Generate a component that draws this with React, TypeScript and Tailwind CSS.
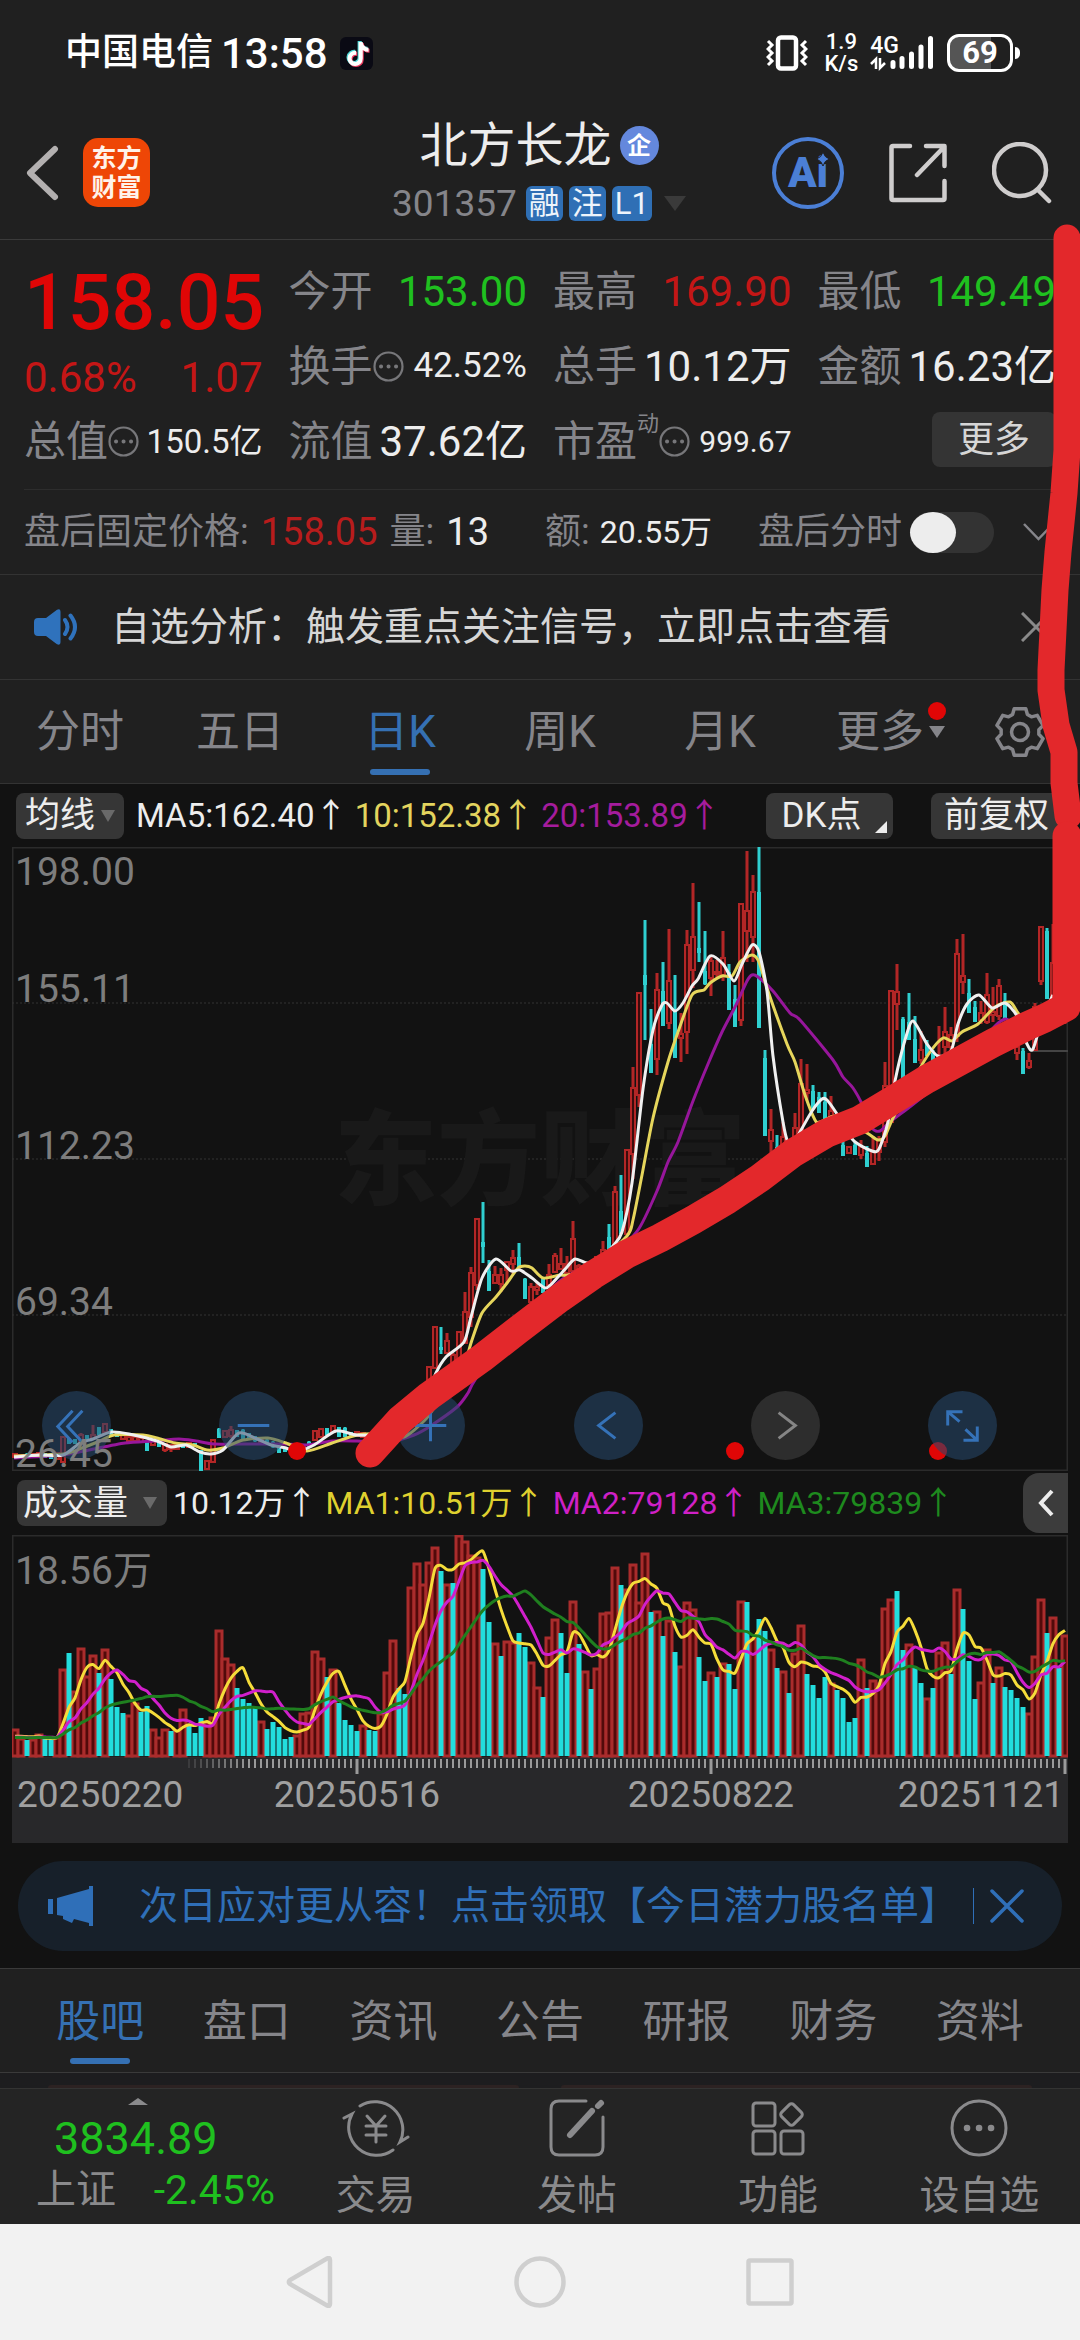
import type { ReactNode } from 'react'
import { FaTiktok } from 'react-icons/fa6'

type Point = [number, number]
// x slot, high, body top, body bottom, low, direction
type Candle = [number, number, number, number, number, 'u' | 'd']

const UP = '#b32626'
const DOWN = '#2fcfd0'

const candles: Candle[] = [
    [0, 607, 607, 610, 610, 'u'], [1, 607, 608, 611, 611, 'u'], [2, 606, 607, 611, 611, 'd'], [3, 606, 607, 610, 610, 'u'],
    [4, 605, 606, 610, 611, 'u'], [5, 606, 606, 611, 611, 'd'], [6, 606, 607, 612, 612, 'd'], [7, 605, 606, 612, 612, 'u'],
    [8, 590, 590, 615, 615, 'u'], [9, 591, 591, 597, 597, 'd'], [10, 592, 592, 597, 597, 'd'], [11, 586, 588, 594, 595, 'u'],
    [12, 588, 588, 594, 594, 'd'], [13, 578, 588, 592, 593, 'u'], [14, 580, 580, 588, 588, 'd'], [15, 576, 577, 585, 586, 'u'],
    [16, 582, 582, 588, 588, 'd'], [17, 586, 586, 590, 590, 'd'], [18, 588, 588, 592, 593, 'u'], [19, 589, 590, 594, 594, 'u'],
    [20, 589, 590, 594, 595, 'u'], [21, 590, 591, 595, 595, 'u'], [22, 595, 595, 604, 604, 'd'], [23, 592, 593, 598, 598, 'u'],
    [24, 594, 595, 600, 600, 'd'], [25, 596, 597, 603, 605, 'u'], [26, 597, 598, 602, 605, 'u'], [27, 598, 598, 602, 603, 'u'],
    [28, 596, 597, 601, 601, 'd'], [29, 595, 596, 600, 601, 'u'], [30, 596, 596, 600, 600, 'd'], [31, 603, 603, 625, 625, 'd'],
    [32, 613, 614, 622, 623, 'u'], [33, 592, 593, 615, 616, 'u'], [34, 581, 582, 591, 591, 'd'], [35, 584, 584, 590, 591, 'u'],
    [36, 579, 583, 589, 591, 'u'], [37, 583, 583, 590, 590, 'd'], [38, 582, 583, 592, 592, 'd'], [39, 586, 586, 592, 593, 'd'],
    [40, 589, 589, 594, 595, 'd'], [41, 591, 591, 595, 596, 'u'], [42, 592, 593, 597, 598, 'd'], [43, 594, 595, 600, 601, 'd'],
    [44, 598, 599, 606, 606, 'd'], [45, 600, 600, 605, 605, 'd'], [46, 601, 601, 605, 605, 'd'], [47, 599, 600, 605, 606, 'u'],
    [48, 598, 599, 604, 604, 'u'], [49, 594, 595, 600, 600, 'd'], [50, 583, 584, 593, 594, 'u'], [51, 581, 582, 590, 591, 'u'],
    [52, 581, 581, 588, 588, 'd'], [53, 578, 579, 585, 586, 'u'], [54, 580, 580, 590, 590, 'd'], [55, 580, 581, 590, 590, 'd'],
    [56, 585, 585, 590, 590, 'd'], [57, 584, 585, 589, 590, 'u'], [58, 585, 586, 590, 590, 'u'], [59, 586, 586, 590, 591, 'd'],
    [60, 585, 586, 590, 590, 'u'], [61, 583, 584, 590, 591, 'u'], [69, 520, 520, 536, 536, 'u'], [70, 480, 480, 521, 521, 'u'],
    [71, 480, 500, 503, 507, 'd'], [72, 486, 494, 506, 506, 'u'], [73, 506, 508, 516, 516, 'u'], [74, 485, 485, 516, 516, 'u'],
    [75, 445, 465, 496, 496, 'u'], [76, 420, 426, 470, 480, 'u'], [77, 371, 372, 438, 443, 'u'], [78, 355, 395, 400, 416, 'd'],
    [79, 413, 424, 444, 444, 'd'], [80, 419, 428, 436, 437, 'u'], [81, 421, 428, 437, 445, 'u'], [82, 415, 415, 423, 436, 'u'],
    [83, 403, 411, 417, 427, 'u'], [84, 396, 410, 420, 420, 'd'], [85, 431, 432, 452, 452, 'd'], [86, 436, 440, 455, 456, 'u'],
    [87, 435, 440, 443, 448, 'u'], [88, 431, 432, 446, 446, 'd'], [89, 417, 428, 438, 438, 'u'], [90, 406, 409, 425, 425, 'u'],
    [91, 401, 417, 422, 422, 'u'], [92, 409, 417, 426, 426, 'u'], [93, 374, 392, 424, 424, 'u'], [94, 417, 419, 426, 426, 'u'],
    [97, 409, 410, 420, 420, 'u'], [98, 394, 403, 409, 409, 'u'], [99, 377, 390, 403, 403, 'd'], [100, 339, 345, 401, 401, 'u'],
    [101, 328, 364, 387, 387, 'd'], [102, 302, 303, 387, 387, 'u'], [103, 220, 241, 307, 332, 'u'], [104, 145, 146, 248, 260, 'u'],
    [105, 73, 128, 138, 193, 'd'], [106, 162, 197, 226, 226, 'd'], [107, 126, 143, 212, 228, 'u'], [108, 115, 144, 179, 179, 'd'],
    [109, 82, 134, 176, 182, 'u'], [110, 128, 162, 211, 211, 'd'], [111, 166, 187, 191, 215, 'u'], [112, 83, 98, 185, 207, 'u'],
    [113, 36, 90, 123, 141, 'u'], [114, 55, 101, 106, 115, 'd'], [115, 84, 124, 137, 138, 'd'], [116, 109, 114, 131, 149, 'u'],
    [117, 113, 125, 127, 132, 'u'], [118, 84, 111, 128, 134, 'u'], [119, 117, 125, 163, 163, 'd'], [120, 138, 152, 180, 180, 'd'],
    [121, 56, 57, 173, 179, 'u'], [122, 4, 64, 84, 115, 'u'], [123, 28, 45, 90, 115, 'u'], [124, 0, 45, 181, 181, 'd'],
    [125, 203, 211, 289, 289, 'd'], [126, 262, 283, 294, 315, 'u'], [127, 288, 300, 315, 315, 'd'], [128, 275, 290, 311, 311, 'u'],
    [129, 295, 296, 307, 307, 'u'], [130, 266, 281, 293, 293, 'u'], [131, 212, 237, 285, 291, 'u'], [132, 217, 243, 246, 254, 'u'],
    [133, 238, 244, 262, 262, 'd'], [134, 245, 250, 266, 266, 'd'], [135, 245, 255, 273, 273, 'd'], [136, 249, 264, 269, 275, 'u'],
    [138, 293, 298, 309, 309, 'd'], [139, 299, 300, 306, 307, 'u'], [140, 295, 298, 308, 308, 'd'], [141, 293, 300, 308, 312, 'u'],
    [142, 299, 306, 320, 320, 'd'], [143, 289, 305, 317, 318, 'u'], [144, 289, 293, 305, 314, 'u'], [145, 215, 239, 295, 300, 'u'],
    [146, 143, 144, 275, 275, 'u'], [147, 117, 145, 157, 183, 'u'], [148, 170, 172, 246, 246, 'd'], [149, 146, 175, 193, 193, 'd'],
    [150, 169, 192, 216, 216, 'd'], [151, 184, 203, 213, 217, 'u'], [152, 193, 197, 209, 209, 'd'], [153, 203, 206, 220, 220, 'd'],
    [154, 179, 209, 215, 217, 'u'], [155, 160, 185, 200, 215, 'u'], [156, 180, 188, 200, 209, 'u'], [157, 92, 107, 189, 195, 'u'],
    [158, 87, 129, 135, 147, 'u'], [159, 132, 146, 166, 166, 'd'], [160, 154, 160, 175, 175, 'd'], [161, 154, 166, 173, 177, 'u'],
    [162, 126, 148, 175, 177, 'u'], [163, 140, 165, 168, 175, 'u'], [164, 132, 139, 169, 173, 'u'], [165, 146, 154, 173, 173, 'd'],
    [167, 197, 200, 206, 213, 'u'], [168, 201, 204, 227, 227, 'd'], [169, 206, 214, 220, 222, 'u'], [170, 156, 160, 203, 203, 'u'],
    [171, 79, 80, 134, 138, 'u'], [172, 81, 84, 152, 152, 'd'], [173, 77, 116, 156, 156, 'u'], [175, 156, 160, 172, 177, 'u'],
]

const ma5: Point[] = [
    [2, 610], [27, 608], [51, 608], [68, 596], [81, 592], [99, 585], [117, 587], [145, 594], [159, 600], [174, 598], [188, 605],
    [199, 607], [211, 603], [227, 586], [245, 592], [259, 598], [274, 601], [284, 605], [302, 598], [324, 584], [345, 588],
    [374, 588], [392, 588], [409, 563], [424, 526], [434, 510], [452, 495], [459, 470], [470, 431], [484, 412], [499, 424],
    [508, 423], [520, 431], [534, 441], [546, 430], [555, 420], [563, 412], [575, 416], [588, 413], [601, 399], [610, 385],
    [620, 336], [631, 242], [641, 183], [650, 158], [655, 156], [663, 164], [671, 156], [680, 139], [686, 132], [698, 109],
    [711, 117], [722, 134], [730, 117], [740, 98], [747, 105], [755, 144], [761, 209], [771, 275], [776, 295], [783, 293],
    [800, 264], [810, 252], [815, 253], [825, 267], [841, 293], [860, 304], [867, 302], [876, 275], [883, 234], [893, 193],
    [901, 174], [915, 197], [926, 209], [939, 204], [946, 177], [955, 157], [967, 148], [980, 161], [993, 156], [1005, 169],
    [1015, 197], [1021, 202], [1031, 169], [1041, 148],
]

const ma10: Point[] = [
    [2, 609], [51, 607], [70, 601], [88, 594], [102, 588], [131, 588], [145, 591], [163, 596], [181, 598], [195, 603], [211, 601],
    [231, 593], [256, 591], [274, 596], [295, 604], [320, 596], [345, 588], [367, 587], [392, 590], [413, 573], [424, 558],
    [440, 535], [452, 520], [459, 496], [470, 466], [484, 450], [495, 436], [506, 421], [513, 419], [520, 421], [531, 431],
    [548, 428], [556, 428], [580, 420], [615, 389], [621, 373], [630, 328], [641, 271], [656, 215], [666, 185], [680, 148],
    [692, 143], [698, 136], [710, 129], [720, 129], [728, 115], [740, 108], [747, 115], [756, 144], [775, 197], [783, 215],
    [793, 248], [803, 273], [808, 275], [826, 269], [855, 286], [866, 293], [873, 289], [881, 271], [903, 230], [918, 205],
    [931, 191], [940, 194], [950, 185], [966, 177], [983, 160], [998, 155], [1006, 166], [1015, 177],
]

const ma20: Point[] = [
    [2, 611], [51, 608], [77, 603], [113, 596], [142, 594], [167, 592], [184, 594], [202, 597], [238, 597], [274, 597], [295, 598],
    [320, 594], [345, 594], [377, 595], [402, 588], [417, 580], [445, 560], [456, 546], [463, 533], [500, 480], [548, 434],
    [565, 424], [598, 410], [626, 383], [645, 344], [656, 315], [666, 295], [681, 254], [696, 217], [710, 185], [723, 160],
    [735, 134], [740, 128], [746, 130], [761, 144], [778, 166], [788, 173], [821, 213], [831, 230], [841, 241], [851, 259],
    [860, 281], [868, 284], [878, 275], [915, 246], [968, 197], [983, 179], [993, 172], [998, 174],
]

// bar heights, negative on a falling day
const volumes = [
    27, 18, -16, 17, 22, -17, -17, 19, 87, -103, 65, 108, 80, 101, -83, 107, -77, -49, -43, 41, 53, -44, -50, 27,
    19, 27, -25, 26, 47, -31, -23, -38, 34, 39, 126, 98, 92, -68, -57, -53, -48, 35, -27, -34, -29, -17, -19, 21,
    43, 44, 105, 98, -79, 87, -53, -36, -31, -25, 31, -26, -25, 43, 84, 116, -68, -62, 169, 193, 172, 194, 209, -185,
    172, -173, 221, 215, 201, 199, -187, -134, 113, -100, 115, 114, -123, -109, 94, 69, -59, 119, 137, -123, -83, 155, -112, 85,
    -67, 88, 143, 144, 189, -171, 167, 192, 154, 203, -144, 145, -120, 136, -104, 90, 154, 147, -99, -75, 84, -79, 93, -92,
    -67, 155, -154, 118, -137, -125, 107, -88, 85, -63, 103, 131, -82, -71, -58, -79, 73, -66, -58, -34, -38, 97, -68, 76,
    73, 148, 157, -165, -106, 112, -88, -73, 58, -68, 104, 114, -82, 167, -147, -95, -57, 74, 107, -73, 89, -69, -66, -58,
    -49, 43, 100, 157, -123, 139, -88, 121,
]

const slotX = (i: number) => 3 + i * 6

function average(size: number): Point[] {
    return volumes.map((_, i) => {
        let sum = 0
        for (let k = i - size + 1; k <= i; k++) sum += k < 0 ? 18 : Math.abs(volumes[k])
        return [slotX(i), 221 - sum / size]
    })
}

function curve(points: Point[]) {
    let d = `M${points[0][0]} ${points[0][1]}`
    for (let i = 0; i < points.length - 1; i++) {
        const p0 = points[i - 1] ?? points[i]
        const p1 = points[i]
        const p2 = points[i + 1]
        const p3 = points[i + 2] ?? p2
        d += `C${p1[0] + (p2[0] - p0[0]) / 8} ${p1[1] + (p2[1] - p0[1]) / 8} ${p2[0] - (p3[0] - p1[0]) / 8} ${p2[1] - (p3[1] - p1[1]) / 8} ${p2[0]} ${p2[1]}`
    }
    return d
}

const gearPoints = [0, 60, 120, 180, 240, 300]
    .flatMap((a) => [[a - 23, 19], [a - 14, 24], [a + 14, 24], [a + 23, 19]])
    .map(([a, r]) => {
        const t = ((a - 90) * Math.PI) / 180
        return `${26 + r * Math.cos(t)},${26 + r * Math.sin(t)}`
    })
    .join(' ')

function StatusBar() {
    return (
        <div className="flex h-[106px] items-center pl-[65px] pr-[60px] text-white">
            <span className="text-[37px] font-medium">中国电信</span>
            <span className="ml-2 text-[42px] font-medium">13:58</span>
            <span className="relative ml-3 flex h-[33px] w-[33px] items-center justify-center rounded-md bg-[#0a0a14]">
                <FaTiktok className="absolute left-[5px] top-[4px] h-6 w-6 text-[#4fd8d8]" />
                <FaTiktok className="absolute left-[7px] top-[6px] h-6 w-6 text-[#ee3a60]" />
                <FaTiktok className="absolute left-[6px] top-[5px] h-6 w-6 text-white" />
            </span>
            <div className="ml-auto flex items-center">
                <svg className="h-[36px] w-[42px]" viewBox="0 0 42 36" fill="none" stroke="currentColor">
                    <rect x="12" y="2.500" width="18" height="31" rx="3" strokeWidth="4.500" />
                    <path d="M2 6l4 4-4 4 4 4-4 4 4 4-4 4M40 6l-4 4 4 4-4 4 4 4-4 4 4 4" strokeWidth="3" />
                </svg>
                <span className="ml-4 flex flex-col items-center text-[22px] leading-[22px] font-medium">
                    <span>1.9</span>
                    <span>K/s</span>
                </span>
                <span className="ml-3 flex flex-col">
                    <span className="text-[23px] leading-[19px] font-medium">4G</span>
                    <svg className="h-4 w-[17px]" viewBox="0 0 17 16" fill="none" stroke="currentColor" strokeWidth="2.500">
                        <path d="M6 14V4L1 9M10 3v10l5-5" />
                    </svg>
                </span>
                <svg className="-ml-[9px] h-[36px] w-[45px]" viewBox="0 0 45 36" stroke="currentColor" strokeWidth="5" strokeLinecap="round">
                    <path d="M3 27.500v4M12 23.500v8M21.500 19v12.500M31 12v19.500M40.500 3.500v28" />
                </svg>
                <span className="ml-3 flex h-[38px] w-[66px] items-center justify-center rounded-xl border-[3px] border-white bg-linear-to-r from-[#555] from-69% to-transparent to-69% text-[31px] font-bold">
                    69
                </span>
                <span className="ml-[2px] h-3 w-[5px] rounded-r-full bg-white" />
            </div>
        </div>
    )
}

function Header() {
    return (
        <header className="grid h-[134px] grid-cols-[1fr_auto_1fr] items-center border-b border-[#3a3a3a] pl-[26px] pr-[28px]">
            <div className="flex items-center gap-6">
                <button aria-label="返回">
                    <svg className="h-[56px] w-[33px]" viewBox="0 0 33 56" fill="none" stroke="#b3b0b0" strokeWidth="6" strokeLinecap="round" strokeLinejoin="round">
                        <path d="M29 4L4 28l25 24" />
                    </svg>
                </button>
                <a href="#home" className="flex h-[69px] w-[67px] flex-col items-center justify-center rounded-[15px] bg-[#ee4606] text-[25px] leading-[29px] font-bold text-[#fff3ea]">
                    <span>东方</span>
                    <span>财富</span>
                </a>
            </div>
            <div className="flex flex-col items-center">
                <h1 className="flex items-center gap-2 text-[48px] leading-[62px] text-[#ededed]">
                    北方长龙
                    <span className="flex h-[39px] w-[39px] items-center justify-center rounded-full bg-[#6488dd] text-[24px] leading-none font-bold text-white">企</span>
                </h1>
                <div className="flex items-center gap-[6px] text-[37px] leading-[54px] text-[#85858a]">
                    <span className="mr-[3px]">301357</span>
                    <Tag>融</Tag>
                    <Tag>注</Tag>
                    <Tag>L1</Tag>
                    <svg className="ml-[6px] h-[15px] w-[22px]" viewBox="0 0 22 15" fill="#3a3a3a">
                        <path d="M0 0h22L11 15z" />
                    </svg>
                </div>
            </div>
            <div className="flex items-center justify-end gap-[45px] text-[#cfcdcd]">
                <button aria-label="Ai" className="relative flex h-[72px] w-[72px] items-center justify-center rounded-full border-4 border-[#4b7fd6] text-[42px] leading-none font-black text-[#4b7fd6]">
                    Ai
                    <svg className="absolute right-[9px] top-[10px] h-4 w-4" viewBox="0 0 16 16" fill="#4b7fd6" stroke="#202020">
                        <path d="M8 1q1.500 5.500 6.500 7Q9.500 9.500 8 15 6.500 9.500 1.500 8 6.500 6.500 8 1z" />
                    </svg>
                </button>
                <button aria-label="分享">
                    <svg className="h-[60px] w-[58px]" viewBox="0 0 58 60" fill="none" stroke="currentColor" strokeWidth="4.500" strokeLinecap="round" strokeLinejoin="round">
                        <path d="M21 3H4q-1.500 0-1.500 1.500v51Q2.500 57 4 57h50q1.500 0 1.500-1.500V38M37 3h18.500v20M55 4L28 32" />
                    </svg>
                </button>
                <button aria-label="搜索">
                    <svg className="h-[62px] w-[60px]" viewBox="0 0 60 62" fill="none" stroke="currentColor" strokeWidth="4.500" strokeLinecap="round">
                        <circle cx="28" cy="28" r="26" />
                        <path d="M46 48l11 11" />
                    </svg>
                </button>
            </div>
        </header>
    )
}

function Tag({ children }: { children: ReactNode }) {
    return <span className="flex h-[35px] min-w-[36px] items-center justify-center rounded-md bg-[#2f6fb5] px-[3px] text-[31px] leading-none text-[#eef4fb]">{children}</span>
}

function InfoDots() {
    return (
        <svg className="h-[31px] w-[31px] shrink-0" viewBox="0 0 31 31" fill="none" stroke="#77777a" strokeWidth="2.200">
            <circle cx="15.500" cy="15.500" r="14" />
            <path d="M8 15.500h.1M15.500 15.500h.1M23 15.500h.1" strokeWidth="4" strokeLinecap="round" />
        </svg>
    )
}

interface StatProps {
    label: string
    value: string
    valueClass?: string
    sup?: string
    info?: boolean
}

function Stat({ label, value, valueClass = 'text-[42px] text-[#ededed]', sup, info }: StatProps) {
    return (
        <div className="flex items-center whitespace-nowrap">
            <span className="text-[42px] text-[#85858a]">{label}</span>
            {sup && <span className="mb-9 text-[22px] text-[#85858a]">{sup}</span>}
            {info && <InfoDots />}
            <span className={`ml-auto ${valueClass}`}>{value}</span>
        </div>
    )
}

function Quote() {
    return (
        <section className="grid grid-cols-4 grid-rows-[75px_75px_75px] gap-x-[26px] px-6 pt-[14px] pb-[10px]">
            <div className="row-span-2 text-[#c41616]">
                <div className="text-right text-[77px] leading-[98px] font-medium text-[#e00606]">158.05</div>
                <div className="flex justify-between text-[42px] leading-[52px]">
                    <span>0.68%</span>
                    <span>1.07</span>
                </div>
            </div>
            <Stat label="今开" value="153.00" valueClass="text-[42px] text-[#1fc01f]" />
            <Stat label="最高" value="169.90" valueClass="text-[42px] text-[#c41616]" />
            <Stat label="最低" value="149.49" valueClass="text-[42px] text-[#1fc01f]" />
            <Stat label="换手" value="42.52%" info valueClass="text-[35px] text-[#ededed]" />
            <Stat label="总手" value="10.12万" />
            <Stat label="金额" value="16.23亿" />
            <Stat label="总值" value="150.5亿" info valueClass="text-[33px] text-[#ededed]" />
            <Stat label="流值" value="37.62亿" />
            <Stat label="市盈" value="999.67" sup="动" info valueClass="text-[30px] text-[#ededed]" />
            <button className="mt-[8px] h-[55px] w-[124px] justify-self-end rounded-lg bg-[#343434] text-[36px] leading-none text-[#d6d6d6]">更多</button>
        </section>
    )
}

function AfterHours() {
    return (
        <section className="mx-6 flex h-[85px] items-center border-t border-[#2d2d2d] text-[36px] whitespace-nowrap text-[#85858a]">
            <span>盘后固定价格:</span>
            <span className="ml-3 text-[38px] text-[#b81c1c]">158.05</span>
            <span className="ml-3">量:</span>
            <span className="ml-3 text-[38px] text-[#ededed]">13</span>
            <span className="ml-[56px]">额:</span>
            <span className="ml-[10px] text-[32px] text-[#ededed]">20.55万</span>
            <label className="ml-auto flex items-center gap-2">
                盘后分时
                <input
                    type="checkbox"
                    className="h-[41px] w-[84px] appearance-none rounded-full bg-[#333] before:block before:h-full before:w-[46px] before:rounded-[50%] before:bg-[#ededed] checked:before:ml-auto"
                />
            </label>
            <button aria-label="展开" className="ml-[29px] mr-[2px]">
                <svg className="h-[18px] w-[31px]" viewBox="0 0 31 18" fill="none" stroke="#85858a" strokeWidth="2.500">
                    <path d="M1 1l14.500 15L30 1" />
                </svg>
            </button>
        </section>
    )
}

function Notice() {
    return (
        <section className="flex h-[106px] items-center border-y border-[#333] pl-[34px] pr-[29px]">
            <svg className="h-[36px] w-[44px]" viewBox="0 0 44 36" fill="#2f72bc">
                <path d="M4 9h8L23 .8q3.500-1.500 3.500 2v30.400q0 3.500-3.500 2L12 27H4q-4 0-4-4V13q0-4 4-4z" />
                <path d="M31 11q5 7 0 14M36.500 6.500q9 11.500 0 23" fill="none" stroke="#2f72bc" strokeWidth="4" strokeLinecap="round" />
            </svg>
            <a href="#analysis" className="ml-[33px] text-[39px] text-[#d6d6d6]">自选分析：触发重点关注信号，立即点击查看</a>
            <button aria-label="关闭" className="ml-auto">
                <svg className="h-[30px] w-[30px]" viewBox="0 0 30 30" stroke="#8a8a8a" strokeWidth="3">
                    <path d="M1 1l28 28M29 1L1 29" />
                </svg>
            </button>
        </section>
    )
}

function PeriodTabs() {
    return (
        <nav className="grid h-[103px] grid-cols-[repeat(6,4fr)_3fr] text-[44px] text-[#85858a]">
            {['分时', '五日', '日K', '周K', '月K', '更多'].map((name) => (
                <button key={name} className={`relative flex items-center justify-center ${name === '日K' ? 'text-[#3570b3]' : ''}`}>
                    {name}
                    {name === '日K' && <span className="absolute bottom-[8px] h-[6px] w-[60px] rounded-full bg-[#3570b3]" />}
                    {name === '更多' && (
                        <>
                            <span className="absolute top-[22px] right-[14px] h-[18px] w-[18px] rounded-full bg-[#e00606]" />
                            <svg className="absolute top-[46px] right-[15px] h-[12px] w-[16px]" viewBox="0 0 16 12" fill="currentColor">
                                <path d="M0 0h16L8 12z" />
                            </svg>
                        </>
                    )}
                </button>
            ))}
            <button aria-label="设置" className="flex items-center justify-center">
                <svg className="h-[52px] w-[52px]" viewBox="0 0 52 52" fill="none" stroke="currentColor" strokeWidth="3.500" strokeLinejoin="round">
                    <polygon points={gearPoints} />
                    <circle cx="26" cy="26" r="8.500" />
                </svg>
            </button>
        </nav>
    )
}

function Caret() {
    return (
        <svg className="h-[12px] w-[14px]" viewBox="0 0 14 12" fill="#6a6a6a">
            <path d="M0 0h14L7 12z" />
        </svg>
    )
}

function PriceLegend() {
    return (
        <div className="flex h-[63px] items-center pr-[6px] pl-1 text-[33px] whitespace-nowrap text-[#ededed]">
            <button className="flex h-[46px] items-center gap-[6px] rounded-lg bg-[#363636] px-[9px] text-[35px] leading-none">
                均线
                <Caret />
            </button>
            <span className="ml-3">MA5:162.40↑</span>
            <span className="ml-[7px] text-[#e3d45e]">10:152.38↑</span>
            <span className="ml-[7px] text-[#a51c9d]">20:153.89↑</span>
            <button className="relative ml-auto h-[46px] w-[127px] rounded-lg bg-[#363636] pr-4 text-[35px] leading-none">
                DK点
                <svg className="absolute right-[6px] bottom-[6px] h-[12px] w-[12px]" viewBox="0 0 12 12" fill="currentColor">
                    <path d="M12 0v12H0z" />
                </svg>
            </button>
            <button className="ml-[38px] h-[46px] w-[131px] rounded-lg bg-[#363636] text-[35px] leading-none">前复权</button>
        </div>
    )
}

const priceLabels = [
    { y: 38, text: '198.00' },
    { y: 155, text: '155.11' },
    { y: 312, text: '112.23' },
    { y: 468, text: '69.34' },
    { y: 620, text: '26.45' },
]

const chartTools = [
    { label: '最左', d: 'M31 20L16 36l15 16M41 20L26 36l15 16' },
    { label: '缩小', d: 'M19 35h32' },
    { label: '放大', d: 'M19 35h32M35 19v32' },
    { label: '左移', d: 'M42 22L25 35l17 13' },
    { label: '右移', d: 'M28 22l17 13-17 13', off: true },
    { label: '全屏', d: 'M32 31L20 21M20 35V21h15M38 39l12 11M50 36v14H36' },
]

function PriceChart() {
    return (
        <div className="relative">
            <svg className="block w-full" viewBox="0 0 1056 624">
                <rect x="0.500" y="0.500" width="1055" height="623" fill="none" stroke="#2b2b2b" strokeWidth="2" />
                <path d="M0 156h1056M0 312h1056M0 468h1056" stroke="#333" strokeDasharray="2 2" />
                <text x="528" y="350" textAnchor="middle" fontSize="103" fontWeight="900" fill="#191919">东方财富</text>
                <path d="M1020 204h36" stroke="#444" strokeWidth="2" />
                {candles.map(([i, high, top, bottom, low, dir]) =>
                    dir === 'u' ? (
                        <g key={i} stroke={UP} strokeWidth="2">
                            <path d={`M${slotX(i)} ${high}V${top}M${slotX(i)} ${bottom}V${low}`} strokeWidth="3" />
                            <rect x={slotX(i) - 2} y={top} width="4" height={bottom - top} fill="#3a0c0c" />
                        </g>
                    ) : (
                        <g key={i} stroke={DOWN}>
                            <path d={`M${slotX(i)} ${high}V${low}`} strokeWidth="3" />
                            <path d={`M${slotX(i)} ${top}V${bottom}`} strokeWidth="4" />
                        </g>
                    )
                )}
                <g fill="none" strokeWidth="3" strokeLinejoin="round">
                    <path d={curve(ma20)} stroke="#97169b" />
                    <path d={curve(ma10)} stroke="#e6d65c" />
                    <path d={curve(ma5)} stroke="#f0f0f0" />
                </g>
                <g fill="#e00606">
                    <circle cx="285" cy="604" r="9" />
                    <circle cx="723" cy="604" r="9" />
                    <circle cx="926" cy="604" r="9" />
                </g>
            </svg>
            <div className="absolute right-[71px] bottom-[11px] left-[30px] flex justify-between">
                {chartTools.map((tool) => (
                    <button
                        key={tool.label}
                        aria-label={tool.label}
                        className={`h-[69px] w-[69px] rounded-full ${tool.off ? 'bg-[#2d2d2d] text-[#858585]' : 'bg-[#26486e]/55 text-[#3572b8]'}`}
                    >
                        <svg viewBox="0 0 70 70" fill="none" stroke="currentColor" strokeWidth="3">
                            <path d={tool.d} />
                        </svg>
                    </button>
                ))}
            </div>
            <svg className="pointer-events-none absolute inset-0 h-full w-full overflow-visible" viewBox="0 0 1056 624" fontSize="39" fill="#7d7d7d">
                {priceLabels.map((label) => (
                    <text key={label.text} x="3" y={label.y}>{label.text}</text>
                ))}
            </svg>
        </div>
    )
}

function VolumeLegend() {
    return (
        <div className="flex h-[64px] items-center pl-[5px] text-[32px] whitespace-nowrap text-[#ededed]">
            <button className="flex h-[46px] items-center gap-[15px] rounded-lg bg-[#363636] pr-[10px] pl-[6px] text-[35px] leading-none">
                成交量
                <Caret />
            </button>
            <span className="ml-[6px]">10.12万↑</span>
            <span className="ml-2 text-[#dfd02f]">MA1:10.51万↑</span>
            <span className="ml-2 text-[#cf20c6]">MA2:79128↑</span>
            <span className="ml-2 text-[#1e8a1e]">MA3:79839↑</span>
            <button aria-label="收起" className="ml-auto flex h-[60px] w-[45px] items-center justify-center rounded-l-2xl bg-[#3c3c3c]">
                <svg className="h-[30px] w-[18px]" viewBox="0 0 18 30" fill="none" stroke="currentColor" strokeWidth="4">
                    <path d="M15 3L4 15l11 12" />
                </svg>
            </button>
        </div>
    )
}

function VolumeChart() {
    return (
        <svg className="block w-full" viewBox="0 0 1056 308">
            <rect x="0.500" y="0.500" width="1055" height="222" fill="none" stroke="#2b2b2b" strokeWidth="2" />
            <text x="3" y="49" fontSize="39" fill="#7d7d7d">18.56万</text>
            <g fill="#520a0a" stroke="#aa2c2c" strokeWidth="3">
                {volumes.map((v, i) => v > 0 && <rect key={i} x={slotX(i) - 3} y={222 - v} width="6" height={v - 1} />)}
            </g>
            <g fill="#22dede">
                {volumes.map((v, i) => v < 0 && <rect key={i} x={slotX(i) - 2.5} y={221 + v} width="5" height={-v} />)}
            </g>
            <g fill="none" strokeWidth="3" strokeLinejoin="round">
                <path d={curve(average(5))} stroke="#f5dc3a" />
                <path d={curve(average(10))} stroke="#d11fcb" />
                <path d={curve(average(20))} stroke="#1f7f1f" />
            </g>
            <rect y="223" width="1056" height="85" fill="#28282a" />
            {volumes.map((_, i) => {
                const major = i === 57 || i === 116 || i === 175
                if (i < 29) return null
                return (
                    <path
                        key={i}
                        d={`M${slotX(i)} 224v${major ? 15 : 9}`}
                        stroke="#9a9a9a"
                        strokeWidth={major ? 3 : 2}
                        opacity={Math.min(1, (i - 27) / 12)}
                    />
                )
            })}
            <g fontSize="37" fill="#a0a0a0">
                <text x="5" y="272">20250220</text>
                <text x="345" y="272" textAnchor="middle">20250516</text>
                <text x="699" y="272" textAnchor="middle">20250822</text>
                <text x="1052" y="272" textAnchor="end">20251121</text>
            </g>
        </svg>
    )
}

function Promo() {
    return (
        <div className="mx-[18px] mt-[18px] flex h-[90px] items-center rounded-full bg-[#17202a] pr-[38px] pl-[29px] text-[#2f6fb8]">
            <svg className="h-[40px] w-[47px]" viewBox="0 0 47 40" fill="currentColor">
                <path d="M1 13h5v15H1zM10 12L42 3V0h4v40h-4v-3l-15-4-2 4-9-4v-3l-6-1z" />
            </svg>
            <a href="#promo" className="ml-[45px] text-[39px]">次日应对更从容！点击领取【今日潜力股名单】</a>
            <span className="ml-auto h-9 w-px bg-[#2f6fb8]" />
            <button aria-label="关闭" className="ml-[16px]">
                <svg className="h-[34px] w-[34px]" viewBox="0 0 34 34" stroke="currentColor" strokeWidth="3.500" strokeLinecap="round">
                    <path d="M2 2l30 30M32 2L2 32" />
                </svg>
            </button>
        </div>
    )
}

function InfoTabs() {
    return (
        <nav className="flex h-[105px] border-y border-[#3a3a3a] bg-[#202020] px-[27px] text-[44px] text-[#85858a]">
            {['股吧', '盘口', '资讯', '公告', '研报', '财务', '资料'].map((name, i) => (
                <a key={name} href={`#tab-${i}`} className={`relative flex flex-1 items-center justify-center pt-[2px] ${i === 0 ? 'text-[#3570b3]' : ''}`}>
                    {name}
                    {i === 0 && <span className="absolute bottom-[8px] h-[6px] w-[60px] rounded-full bg-[#3570b3]" />}
                </a>
            ))}
        </nav>
    )
}

function NavItem({ label, children }: { label: string; children: ReactNode }) {
    return (
        <button className="flex flex-1 flex-col items-center pt-2 text-[40px] leading-[54px]">
            <svg className="h-[62px] w-[68px]" viewBox="-34 -31 68 62" fill="none" stroke="currentColor" strokeWidth="3" strokeLinecap="round">
                {children}
            </svg>
            <span className="mt-[10px]">{label}</span>
        </button>
    )
}

function BottomBar() {
    return (
        <footer className="flex h-[136px] border-t border-[#333] bg-[#242424] text-[#8a8a8c]">
            <button className="flex w-[275px] flex-col pt-[9px] pl-[36px] text-left">
                <svg className="ml-[92px] h-[7px] w-[20px]" viewBox="0 0 20 7" fill="currentColor">
                    <path d="M0 7h20L10 0z" />
                </svg>
                <span className="pt-2 pl-[18px] text-[45px] leading-[52px] text-[#1fc01f]">3834.89</span>
                <span className="flex items-center justify-between text-[40px] leading-[50px]">
                    上证
                    <span className="text-[41px] text-[#1fc01f]">-2.45%</span>
                </span>
            </button>
            <NavItem label="交易">
                <path d="M-16-22A28 28 0 0 1 24 14l8-5M17 22A28 28 0 0 1-24-14l-8 4" />
                <path d="M-9-12L0-2 9-12M0-2v16M-10-2h20M-10 7h20" />
            </NavItem>
            <NavItem label="发帖">
                <path d="M9-27h-27q-8 0-8 8v38q0 8 8 8h36q8 0 8-8v-30" />
                <path d="M-7 7L15-17" strokeWidth="6" />
                <path d="M21-22l3-3" strokeWidth="6" />
            </NavItem>
            <NavItem label="功能">
                <rect x="-25" y="-25" width="22" height="23" rx="3" />
                <rect x="-25" y="3" width="22" height="23" rx="3" />
                <rect x="3" y="3" width="22" height="23" rx="3" />
                <rect x="5" y="-22" width="17" height="17" rx="3" transform="rotate(45 13.500 -13.500)" />
            </NavItem>
            <NavItem label="设自选">
                <circle r="27" />
                <path d="M-12 0h.1M0 0h.1M12 0h.1" strokeWidth="6.500" />
            </NavItem>
        </footer>
    )
}

const systemKeys = [
    { label: '返回', d: 'M46 4v44q0 3-3 1.500L6 28q-2.500-2 0-4L43 2.500Q46 1 46 4z' },
    { label: '主页', d: 'M26 2.500a23.500 23.500 0 1 1 0 47 23.500 23.500 0 1 1 0-47z' },
    { label: '最近', d: 'M6 4.500h40q1.500 0 1.500 1.500v40q0 1.500-1.500 1.500H6q-1.500 0-1.500-1.500V6q0-1.500 1.500-1.500z' },
]

function SystemNav() {
    return (
        <div className="flex h-[116px] items-center justify-center gap-[178px] bg-[#f2f2f2]">
            {systemKeys.map((item) => (
                <button key={item.label} aria-label={item.label}>
                    <svg className="h-[52px] w-[52px]" viewBox="0 0 52 52" fill="none" stroke="#cfcfcf" strokeWidth="4.500">
                        <path d={item.d} />
                    </svg>
                </button>
            ))}
        </div>
    )
}

function Scribble() {
    return (
        <svg className="pointer-events-none absolute inset-x-0 top-0 w-full" viewBox="0 0 1080 2340" fill="none" stroke="#e3282b" strokeWidth="27" strokeLinecap="round" strokeLinejoin="round">
            <path d="M1067 238V450L1064 493 1058 552 1055 590 1051 670 1051 690 1056 725 1064 752 1064 783 1068 816" />
            <path d="M1067 836V995L1066 1007 1045 1018 1027 1026 993 1043 960 1061 927 1079 893 1100 860 1120 827 1133 793 1153 760 1178 727 1200 693 1220 660 1238 627 1254 593 1275 560 1298 518 1330 482 1358 429 1396 400 1420 370 1453" strokeWidth="29" />
        </svg>
    )
}

export default function App() {
    return (
        <div className="relative w-full overflow-hidden bg-[#202020] font-[Roboto,'Noto_Sans_CJK_SC',sans-serif]">
            <StatusBar />
            <Header />
            <Quote />
            <AfterHours />
            <Notice />
            <PeriodTabs />
            <main className="border-t border-[#333] bg-[#121212] pb-[17px]">
                <div className="px-3">
                    <PriceLegend />
                    <PriceChart />
                    <VolumeLegend />
                    <VolumeChart />
                </div>
                <Promo />
            </main>
            <InfoTabs />
            <div className="flex h-[15px] items-end gap-[42px] bg-[#1d1d1f] px-[48px]">
                <div className="h-[3px] flex-1 rounded-t-full bg-[#2c2222]" />
                <div className="h-[3px] flex-1 rounded-t-full bg-[#2c2222]" />
            </div>
            <BottomBar />
            <SystemNav />
            <Scribble />
        </div>
    )
}
